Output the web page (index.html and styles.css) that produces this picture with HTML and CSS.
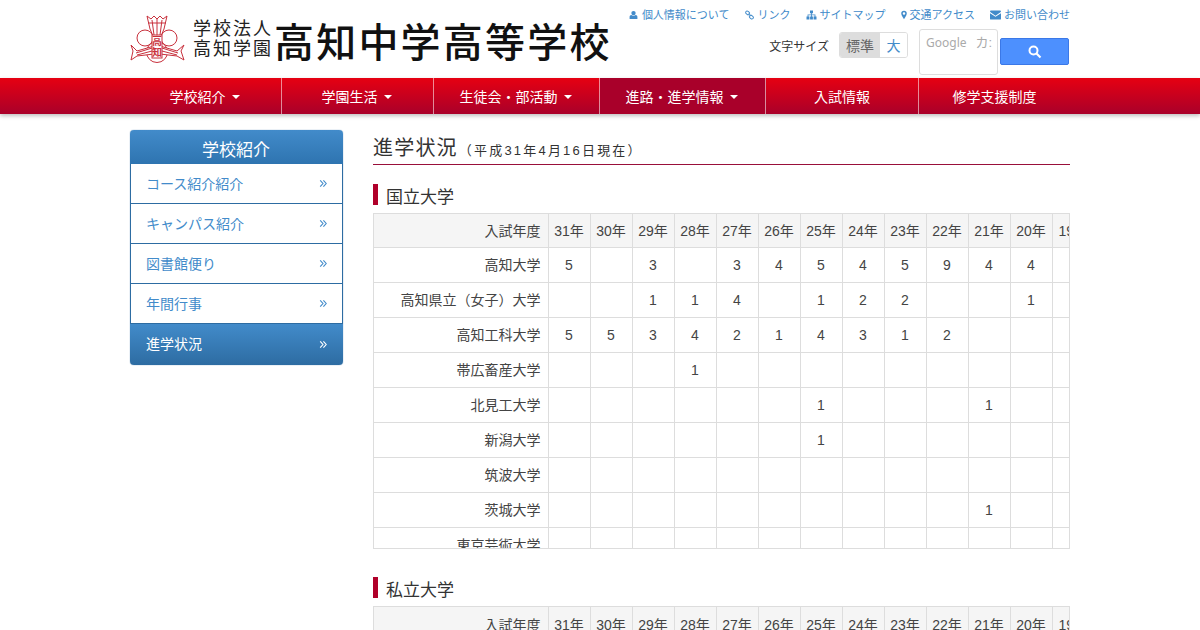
FILE: index.html
```html
<!DOCTYPE html>
<html lang="ja">
<head>
<meta charset="utf-8">
<title>進学状況</title>
<link rel="stylesheet" href="styles.css">
</head>
<body>
<svg class="defs" width="0" height="0" aria-hidden="true">
  <symbol id="i-user" viewBox="0 0 12 12"><circle cx="6" cy="3.4" r="2.9" fill="currentColor"/><path d="M.8 11.4V8.600c0-1.500 1.100-2.400 2.300-2.500.8.600 1.800.9 2.900.9s2.100-.3 2.900-.9c1.200.1 2.300 1 2.300 2.500v2.800z" fill="currentColor"/></symbol>
  <symbol id="i-link" viewBox="0 0 12 12"><g fill="none" stroke="currentColor" stroke-width="1.300"><rect x=".7" y="1.200" width="5.600" height="4" rx="2" transform="rotate(40 3.500 3.200)"/><rect x="5.700" y="6.800" width="5.600" height="4" rx="2" transform="rotate(40 8.500 8.800)"/><path d="M4.600 4.400l2.800 2.800"/></g></symbol>
  <symbol id="i-map" viewBox="0 0 13 12"><path d="M4.700.6h3.600v3.200H7v1.600h4.200v2.400h1.300v3.600H9V7.800h1.200V6.400H7v1.400h1.200v3.600H4.800V7.800H6V6.400H2.800v1.400H4v3.600H.5V7.800h1.300V5.400H6V3.800H4.700z" fill="currentColor"/></symbol>
  <symbol id="i-pin" viewBox="0 0 8 12"><path fill-rule="evenodd" d="M4 .3a3.700 3.700 0 0 1 3.700 3.700C7.700 6.300 5 10 4 11.700 3 10 .3 6.300.3 4A3.700 3.700 0 0 1 4 .3zm0 2a1.700 1.700 0 1 0 0 3.400 1.700 1.700 0 0 0 0-3.400z" fill="currentColor"/></symbol>
  <symbol id="i-mail" viewBox="0 0 12 10"><path d="M1 0h10a1 1 0 0 1 1 1c0 .6-.5 1-1 1.400L6 5.800 1 2.400C.5 2 0 1.600 0 1a1 1 0 0 1 1-1zM0 3l6 4 6-4v6a1 1 0 0 1-1 1H1a1 1 0 0 1-1-1z" fill="currentColor"/></symbol>
  <symbol id="i-chev" viewBox="0 0 10 10"><path d="M1.500 1l3.500 4-3.500 4M5.500 1l3.500 4-3.500 4" fill="none" stroke="currentColor" stroke-width="1.400"/></symbol>
</svg>

<header class="top">
  <div class="wrap top-in">
    <a class="brand" href="#">
      <svg class="emblem" width="56" height="49" viewBox="0 0 56 49" aria-hidden="true">
        <g fill="none" stroke="#c8303c" stroke-width="1">
          <circle cx="15" cy="23" r="8"/><circle cx="39" cy="23" r="8"/><circle cx="27" cy="37" r="10.500"/>
          <path d="M17 1l4 3 3-3 3 3 3-3 3 3 4-3-3 13-3 7H23l-3-7z" fill="#fff"/>
          <path d="M22 5l2 15M27 4v16M32 5l-2 15M18 8h18"/>
          <path d="M24 31L7 36 1 30l2 6-2 9 6-4 17-2zM30 31l17 5 7-6-3 6 3 9-7-4-17-2z" fill="#fff"/>
          <path d="M22 33L6 38M22 36L7 40M32 33l16 5M32 36l15 4"/>
        </g>
        <rect x="22" y="20" width="10" height="23" fill="#fff" stroke="#c8303c"/>
        <text x="27" y="30" class="emblem-t">高</text>
        <text x="27" y="41" class="emblem-t">知</text>
      </svg>
      <span class="corp"><span>学校法人</span><span>高知学園</span></span>
      <span class="school">高知中学高等学校</span>
    </a>
    <div class="tools">
      <nav class="util">
        <a href="#"><svg class="ic ic-u"><use href="#i-user"/></svg>個人情報について</a>
        <a href="#"><svg class="ic ic-u"><use href="#i-link"/></svg>リンク</a>
        <a href="#"><svg class="ic ic-m"><use href="#i-map"/></svg>サイトマップ</a>
        <a href="#"><svg class="ic ic-p"><use href="#i-pin"/></svg>交通アクセス</a>
        <a href="#"><svg class="ic ic-e"><use href="#i-mail"/></svg>お問い合わせ</a>
      </nav>
      <div class="tool-row">
        <span class="size-label">文字サイズ</span>
        <span class="size-group"><span class="size-btn is-on">標準</span><span class="size-btn">大</span></span>
        <span class="g-input"><span class="g-logo">Google</span><span class="g-hint">カ:</span></span>
        <button class="g-btn" type="button" aria-label="検索"><svg width="14" height="14" viewBox="0 0 14 14"><circle cx="5.500" cy="5.500" r="4" fill="none" stroke="#fff" stroke-width="2"/><path d="M8.500 8.500l4 4" stroke="#fff" stroke-width="2.200"/></svg></button>
      </div>
    </div>
  </div>
</header>

<nav class="gnav">
  <div class="wrap gnav-in">
    <a class="gi w1 caret" href="#">学校紹介</a>
    <a class="gi w1 caret" href="#">学園生活</a>
    <a class="gi w2 caret" href="#">生徒会・部活動</a>
    <a class="gi w2 caret active" href="#">進路・進学情報</a>
    <a class="gi w3" href="#">入試情報</a>
    <a class="gi w4" href="#">修学支援制度</a>
  </div>
</nav>

<div class="wrap page">
  <aside class="side">
    <h2 class="side-h">学校紹介</h2>
    <a class="side-i" href="#">コース紹介紹介<svg class="chev"><use href="#i-chev"/></svg></a>
    <a class="side-i" href="#">キャンパス紹介<svg class="chev"><use href="#i-chev"/></svg></a>
    <a class="side-i" href="#">図書館便り<svg class="chev"><use href="#i-chev"/></svg></a>
    <a class="side-i" href="#">年間行事<svg class="chev"><use href="#i-chev"/></svg></a>
    <a class="side-i current" href="#">進学状況<svg class="chev"><use href="#i-chev"/></svg></a>
  </aside>
  <main class="main">
    <h1 class="title">進学状況<small>（平成31年4月16日現在）</small></h1>
    <h3 class="sec">国立大学</h3>
    <div class="tbl-box">
      <table>
        <thead><tr><th>入試年度</th><th>31年</th><th>30年</th><th>29年</th><th>28年</th><th>27年</th><th>26年</th><th>25年</th><th>24年</th><th>23年</th><th>22年</th><th>21年</th><th>20年</th><th>19年</th></tr></thead>
        <tbody>
          <tr><td>高知大学</td><td>5</td><td></td><td>3</td><td></td><td>3</td><td>4</td><td>5</td><td>4</td><td>5</td><td>9</td><td>4</td><td>4</td><td></td></tr>
          <tr><td>高知県立（女子）大学</td><td></td><td></td><td>1</td><td>1</td><td>4</td><td></td><td>1</td><td>2</td><td>2</td><td></td><td></td><td>1</td><td></td></tr>
          <tr><td>高知工科大学</td><td>5</td><td>5</td><td>3</td><td>4</td><td>2</td><td>1</td><td>4</td><td>3</td><td>1</td><td>2</td><td></td><td></td><td></td></tr>
          <tr><td>帯広畜産大学</td><td></td><td></td><td></td><td>1</td><td></td><td></td><td></td><td></td><td></td><td></td><td></td><td></td><td></td></tr>
          <tr><td>北見工大学</td><td></td><td></td><td></td><td></td><td></td><td></td><td>1</td><td></td><td></td><td></td><td>1</td><td></td><td></td></tr>
          <tr><td>新潟大学</td><td></td><td></td><td></td><td></td><td></td><td></td><td>1</td><td></td><td></td><td></td><td></td><td></td><td></td></tr>
          <tr><td>筑波大学</td><td></td><td></td><td></td><td></td><td></td><td></td><td></td><td></td><td></td><td></td><td></td><td></td><td></td></tr>
          <tr><td>茨城大学</td><td></td><td></td><td></td><td></td><td></td><td></td><td></td><td></td><td></td><td></td><td>1</td><td></td><td></td></tr>
          <tr><td>東京芸術大学</td><td></td><td></td><td></td><td></td><td></td><td></td><td></td><td></td><td></td><td></td><td></td><td></td><td></td></tr>
        </tbody>
      </table>
    </div>
    <h3 class="sec sec-2">私立大学</h3>
    <div class="tbl-box">
      <table>
        <thead><tr><th>入試年度</th><th>31年</th><th>30年</th><th>29年</th><th>28年</th><th>27年</th><th>26年</th><th>25年</th><th>24年</th><th>23年</th><th>22年</th><th>21年</th><th>20年</th><th>19年</th></tr></thead>
      </table>
    </div>
  </main>
</div>
</body>
</html>
```
FILE: styles.css
```css
* { box-sizing: border-box; }
html, body { margin: 0; height: 630px; overflow: hidden; }
body { font-family: "Liberation Sans", "Noto Sans CJK JP", sans-serif; font-size: 14px; line-height: 20px; color: #444; background: #fff; }
a { text-decoration: none; color: inherit; }
.defs { position: absolute; }
.wrap { width: 940px; margin: 0 auto; }

.top { height: 78px; }
.top-in { display: flex; justify-content: space-between; height: 78px; }
.brand { display: flex; align-items: flex-start; padding-top: 15px; }
.emblem { flex: none; margin-right: 7px; }
.emblem-t { font-size: 10px; fill: #c8303c; text-anchor: middle; font-family: "Noto Sans CJK JP", sans-serif; font-weight: 700; }
.corp { display: flex; flex-direction: column; width: 78px; margin-top: 2px; font-family: "Noto Sans CJK JP", sans-serif; font-size: 18px; line-height: 20px; letter-spacing: 2px; color: #222; white-space: nowrap; }
.school { margin-left: 3px; font-family: "Noto Sans CJK JP", sans-serif; font-size: 40px; line-height: 50px; font-weight: 500; letter-spacing: 2.200px; color: #111; white-space: nowrap; }

.tools { display: flex; flex-direction: column; align-items: flex-end; }
.util { display: flex; gap: 15px; padding-top: 6px; height: 29px; font-size: 11px; line-height: 18px; color: #428bca; white-space: nowrap; }
.ic { display: inline-block; vertical-align: -1px; margin-right: 3px; }
.ic-u { width: 9px; height: 10px; margin-right: 4px; }
.ic-m { width: 11px; height: 10px; }
.ic-p { width: 6px; height: 10px; }
.ic-e { width: 11px; height: 10px; }

.tool-row { display: flex; align-items: flex-start; padding-right: 1px; }
.size-label { margin-top: 9px; margin-right: 10px; font-size: 12px; line-height: 18px; color: #333; }
.size-group { display: flex; margin-top: 3px; margin-right: 11px; height: 26px; border: 1px solid #ddd; border-radius: 3px; overflow: hidden; }
.size-btn { width: 27px; text-align: center; line-height: 26px; color: #428bca; background: #fff; }
.size-btn.is-on { width: 40px; color: #666; background: #ddd; }
.g-input { display: flex; gap: 9px; width: 79px; height: 46px; padding: 5px 0 0 6px; border: 1px solid #ddd; border-radius: 3px; overflow: hidden; white-space: nowrap; font-size: 13px; line-height: 16px; color: #aaa; }
.g-logo { font-family: "Noto Sans", sans-serif; font-size: 12px; }
.g-btn { width: 69px; height: 27px; margin: 9px 0 0 2px; padding: 0; border: 1px solid #3b78e7; border-radius: 2px; background: #4d90fe; display: flex; align-items: center; justify-content: center; }

.gnav { height: 36px; background: linear-gradient(#e60012, #a9002a); box-shadow: 0 2px 4px rgba(0,0,0,.25); position: relative; }
.gnav-in { display: flex; height: 36px; }
.gi { display: flex; align-items: center; justify-content: center; color: #fff; border-right: 1px solid rgba(255,255,255,.55); line-height: 38px; padding-top: 2px; }
.gi:last-child { border-right: 0; }
.w1 { width: 152px; }
.w2 { width: 166px; }
.w3 { width: 153px; }
.w4 { width: 151px; }
.active { background: #a9002a; }
.caret { padding-right: 2px; }
.caret::after { content: ""; margin-left: 6px; border-top: 4px solid #fff; border-left: 4px solid transparent; border-right: 4px solid transparent; }

.page { display: flex; gap: 30px; padding-top: 16px; }
.side { flex: none; width: 213px; align-self: flex-start; border-radius: 4px; overflow: hidden; box-shadow: 0 0 1px #2d6ca2; }
.side-h { margin: 0; height: 34px; padding-right: 1px; font-size: 17px; font-weight: 400; line-height: 42px; text-align: center; color: #fff; background: linear-gradient(#428bca, #2e74b0); }
.side-i { display: flex; align-items: center; justify-content: space-between; height: 40px; padding: 0 15px; color: #428bca; background: #fff; border: 1px solid #2d6ca2; border-top: 0; }
.current { height: 41px; padding: 0 16px 1px; color: #fff; background: linear-gradient(#428bca, #2d6ca2); border: 0; }
.chev { width: 8px; height: 9px; }

.main { width: 697px; flex: none; }
.title { margin: 3px 0 0; height: 32px; font-size: 20px; font-weight: 400; line-height: 31px; letter-spacing: 1.200px; color: #333; border-bottom: 1px solid #990f3a; white-space: nowrap; }
.title small { font-size: 13px; letter-spacing: 2.200px; margin-left: 1px; }
.sec { margin: 19px 0 8px; padding-left: 8px; height: 21px; font-size: 17px; font-weight: 400; line-height: 27px; color: #333; border-left: 5px solid #b0002a; }
.sec-2 { margin-top: 28px; }

.tbl-box { height: 336px; overflow: hidden; border: 1px solid #ddd; }
table { border-collapse: collapse; table-layout: fixed; width: 720px; }
th:first-child, td:first-child { width: 174px; text-align: right; padding: 0 7px 0 0; }
th, td { width: 42px; height: 35px; padding: 0; text-align: center; font-weight: 400; white-space: nowrap; border-left: 1px solid #ddd; border-top: 1px solid #ddd; }
th:first-child, td:first-child { border-left: 0; }
thead th { height: 33px; padding-top: 2px; border-top: 0; background: #f5f5f5; }
th:first-child { padding-top: 2px; }
```
